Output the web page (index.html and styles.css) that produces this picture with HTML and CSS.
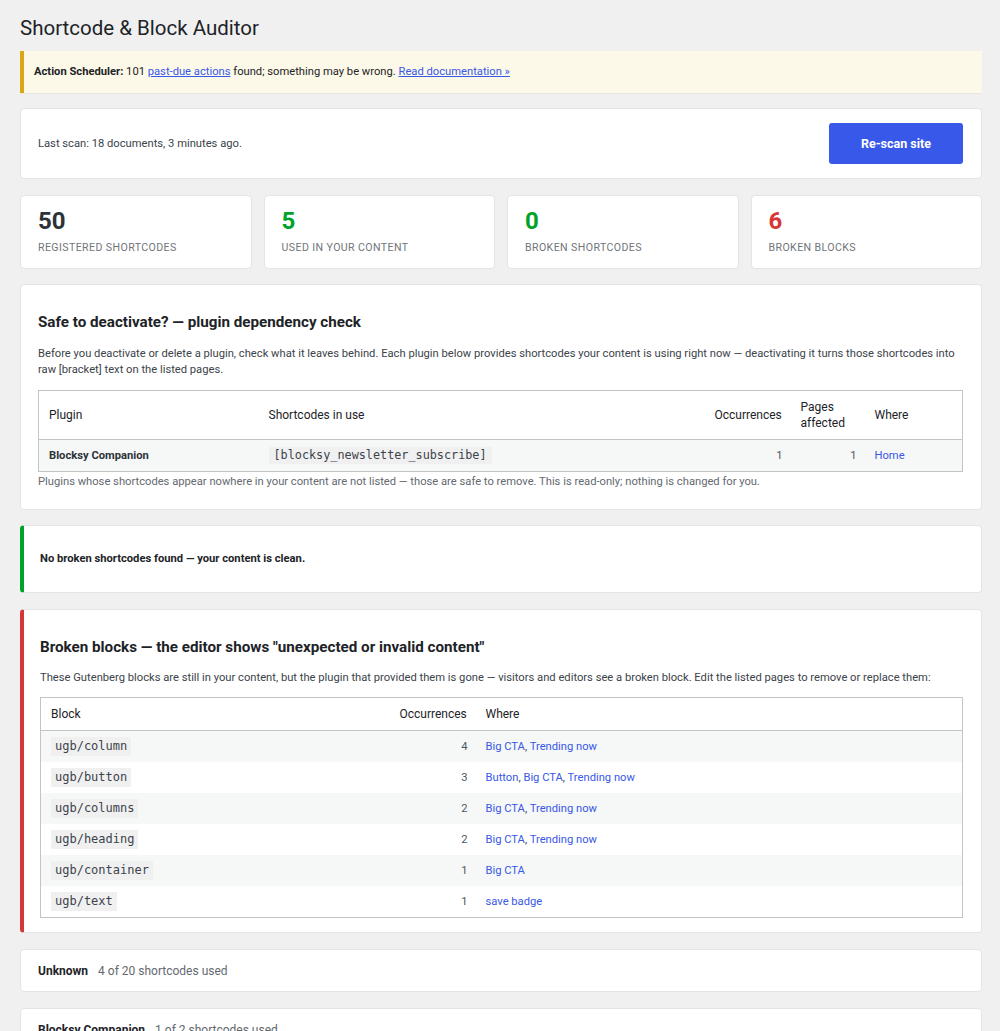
FILE: index.html
```html
<!DOCTYPE html>
<html>
	<head>
		<meta charset="utf-8">
		<title>Shortcode &amp; Block Auditor</title>
		<link rel="stylesheet" href="styles.css">
	</head>
	<body>
		<div class="wrap">
			<h1 class="page-title">Shortcode &amp; Block Auditor</h1>

			<div class="notice notice-warning">
				<p><strong>Action Scheduler:</strong> 101 <a href="#">past-due actions</a> found; something may be wrong. <a href="#">Read documentation &raquo;</a></p>
			</div>

			<div class="stack">
				<div class="card scan-bar">
					<span>Last scan: 18 documents, 3 minutes ago.</span>
					<button class="button-primary">Re-scan site</button>
				</div>

				<div class="stats">
					<div class="card stat">
						<div class="stat-num">50</div>
						<div class="stat-label">Registered shortcodes</div>
					</div>
					<div class="card stat">
						<div class="stat-num good">5</div>
						<div class="stat-label">Used in your content</div>
					</div>
					<div class="card stat">
						<div class="stat-num good">0</div>
						<div class="stat-label">Broken shortcodes</div>
					</div>
					<div class="card stat">
						<div class="stat-num bad">6</div>
						<div class="stat-label">Broken blocks</div>
					</div>
				</div>

				<!-- plugin dependency check -->
				<div class="card section deps-card">
					<h2>Safe to deactivate? &mdash; plugin dependency check</h2>
					<p>Before you deactivate or delete a plugin, check what it leaves behind. Each plugin below provides shortcodes your content is using right now &mdash; deactivating it turns those shortcodes into raw [bracket] text on the listed pages.</p>
					<table class="widefat striped deps">
						<colgroup>
							<col style="width:220px">
							<col>
							<col style="width:86px">
							<col style="width:74px">
							<col style="width:98px">
						</colgroup>
						<thead>
							<tr>
								<th>Plugin</th>
								<th>Shortcodes in use</th>
								<th>Occurrences</th>
								<th>Pages affected</th>
								<th>Where</th>
							</tr>
						</thead>
						<tbody>
							<tr>
								<td><strong>Blocksy Companion</strong></td>
								<td><code>[blocksy_newsletter_subscribe]</code></td>
								<td class="num">1</td>
								<td class="num">1</td>
								<td><a href="#">Home</a></td>
							</tr>
						</tbody>
					</table>
					<p class="footnote">Plugins whose shortcodes appear nowhere in your content are not listed &mdash; those are safe to remove. This is read-only; nothing is changed for you.</p>
				</div>

				<div class="card section flag-ok">
					<p class="ok-msg"><strong>No broken shortcodes found &mdash; your content is clean.</strong></p>
				</div>

				<!-- broken blocks -->
				<div class="card section flag-bad">
					<h2>Broken blocks &mdash; the editor shows "unexpected or invalid content"</h2>
					<p>These Gutenberg blocks are still in your content, but the plugin that provided them is gone &mdash; visitors and editors see a broken block. Edit the listed pages to remove or replace them:</p>
					<table class="widefat striped blocks">
						<colgroup>
							<col style="width:349px">
							<col style="width:86px">
							<col>
						</colgroup>
						<thead>
							<tr>
								<th>Block</th>
								<th>Occurrences</th>
								<th>Where</th>
							</tr>
						</thead>
						<tbody>
							<tr><td><code>ugb/column</code></td><td class="num">4</td><td><a href="#">Big CTA</a>, <a href="#">Trending now</a></td></tr>
							<tr><td><code>ugb/button</code></td><td class="num">3</td><td><a href="#">Button</a>, <a href="#">Big CTA</a>, <a href="#">Trending now</a></td></tr>
							<tr><td><code>ugb/columns</code></td><td class="num">2</td><td><a href="#">Big CTA</a>, <a href="#">Trending now</a></td></tr>
							<tr><td><code>ugb/heading</code></td><td class="num">2</td><td><a href="#">Big CTA</a>, <a href="#">Trending now</a></td></tr>
							<tr><td><code>ugb/container</code></td><td class="num">1</td><td><a href="#">Big CTA</a></td></tr>
							<tr><td><code>ugb/text</code></td><td class="num">1</td><td><a href="#">save badge</a></td></tr>
						</tbody>
					</table>
				</div>

				<div class="card plugin-row">
					<strong>Unknown</strong>
					<span class="muted">4 of 20 shortcodes used</span>
				</div>

				<div class="card plugin-row">
					<strong>Blocksy Companion</strong>
					<span class="muted">1 of 2 shortcodes used</span>
				</div>
			</div>
		</div>
	</body>
</html>
```

FILE: styles.css
```css
body {
	margin: 0;
	background-color: #f0f0f1;
	color: #3c434a;
	font-family: Roboto, "Noto Sans", sans-serif;
	font-size: 11.2px;
	line-height: 16px;
}

a {
	color: #3858e9;
	text-decoration: none;
}

.wrap {
	padding: 0 18px 0 20px;
}

.page-title {
	margin: 0;
	padding: 13px 0 8px;
	font-size: 20.5px;
	font-weight: 400;
	line-height: 30px;
	color: #1d2327;
}

/* warning banner from another plugin */
.notice {
	background-color: #fcf9e8;
	border-left: 4px solid #dba617;
	padding: 13px 10px;
	margin-bottom: 15px;
	box-shadow: 0 1px 1px rgba(0, 0, 0, 0.04);
}

.notice p {
	margin: 0;
	color: #1d2327;
}

.notice a {
	text-decoration: underline;
}

.stack {
	display: flex;
	flex-direction: column;
	gap: 16px;
}

.card {
	background-color: #fff;
	border: 1px solid #e2e4e7;
	border-radius: 4px;
	box-sizing: border-box;
}

.scan-bar {
	display: flex;
	align-items: center;
	justify-content: space-between;
	padding: 14px 18px 14px 17px;
	color: #3c434a;
}

.button-primary {
	height: 41px;
	width: 134px;
	border: none;
	border-radius: 3px;
	background-color: #3858e9;
	color: #fff;
	font-family: Roboto, sans-serif;
	font-size: 12.5px;
	font-weight: 700;
}

.stats {
	display: grid;
	grid-template-columns: repeat(4, 1fr);
	gap: 12px;
	margin-bottom: -1px;
}

.stat {
	padding: 11px 17px 13px;
}

.stat-num {
	font-size: 24px;
	font-weight: 700;
	line-height: 28px;
	color: #2c3338;
}

.stat-num.good {
	color: #00a32a;
}

.stat-num.bad {
	color: #d63638;
}

.stat-label {
	margin-top: 5px;
	font-size: 10.6px;
	line-height: 15px;
	text-transform: uppercase;
	letter-spacing: 0.4px;
	color: #70757a;
}

.section {
	padding: 18px 18px 15px 17px;
}

.section h2 {
	margin: 9px 0 14px;
	font-size: 15.2px;
	line-height: 20px;
	color: #1d2327;
}

.section p {
	margin: 0 0 12px;
}

.deps-card {
	margin-bottom: -1px;
}

.section .footnote {
	margin: 2px 0 4px;
	color: #646970;
}

.flag-ok {
	border-left: 4px solid #00a32a;
	padding: 25px 18px 25px 16px;
}

.flag-bad {
	border-left: 4px solid #d63638;
	padding-left: 16px;
	padding-bottom: 14px;
}

.flag-bad h2 {
	margin-bottom: 13px;
}

.flag-bad p {
	margin-bottom: 11px;
}

.section .ok-msg {
	margin: 0;
	color: #1d2327;
}

.widefat {
	width: 100%;
	table-layout: fixed;
	border-collapse: collapse;
	border: 1px solid #c3c4c7;
}

.widefat th {
	text-align: left;
	font-size: 12px;
	font-weight: 400;
	color: #1d2327;
	padding: 8px 10px;
	border-bottom: 1px solid #c3c4c7;
	vertical-align: middle;
}

.widefat td {
	padding: 7px 10px;
	vertical-align: middle;
	color: #3c434a;
}

.widefat td strong {
	color: #2c3338;
}

.striped tbody tr:nth-child(odd) {
	background-color: #f6f7f7;
}

.widefat td.num {
	text-align: right;
	padding-right: 8px;
	color: #50575e;
}

.deps tbody tr {
	height: 32px;
}

.blocks tbody tr {
	height: 31px;
}

.blocks td {
	padding-top: 6px;
	padding-bottom: 6px;
	line-height: 17px;
}

code {
	display: inline-block;
	vertical-align: middle;
	font-family: "DejaVu Sans Mono", monospace;
	font-size: 12px;
	line-height: 17px;
	padding: 1px 4px;
	background-color: #f0f0f1;
	color: #3c434a;
}

.deps code {
	font-size: 11.8px;
	padding: 0 5px;
}

.plugin-row {
	padding: 13px 18px 12px 17px;
	display: flex;
	gap: 10px;
	align-items: baseline;
	font-size: 12px;
	color: #1d2327;
}

.muted {
	color: #646970;
}
```
